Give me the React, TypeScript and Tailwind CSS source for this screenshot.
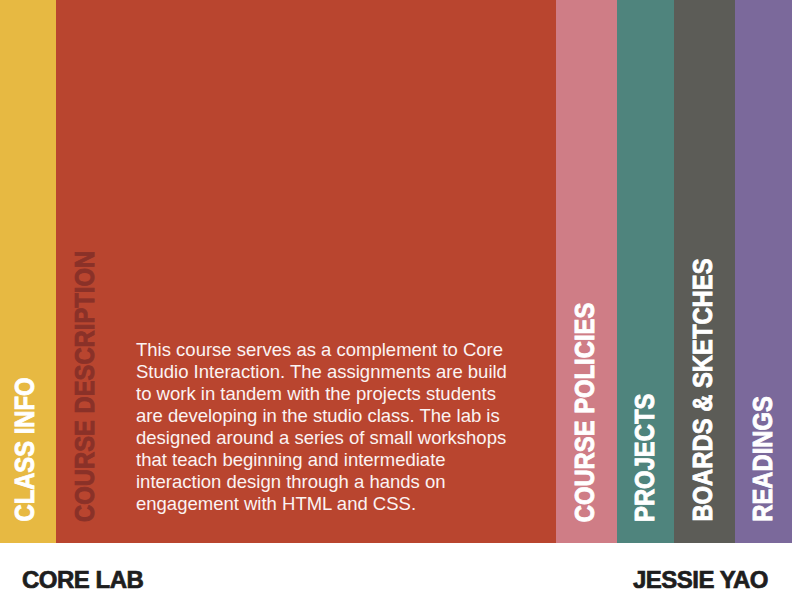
interface Column {
  label: string;
  bg: string;
  width: string;
  pad: string;
}

const columns: Column[] = [
  { label: 'CLASS INFO', bg: 'bg-[#e7b942]', width: 'w-[56px]', pad: 'pl-[11px]' },
  { label: 'COURSE POLICIES', bg: 'bg-[#cf7d86]', width: 'w-[61px]', pad: 'pl-[15px]' },
  { label: 'PROJECTS', bg: 'bg-[#4f847d]', width: 'w-[57px]', pad: 'pl-[14px]' },
  { label: 'BOARDS & SKETCHES', bg: 'bg-[#5c5c57]', width: 'w-[61px]', pad: 'pl-[15px]' },
  { label: 'READINGS', bg: 'bg-[#7b699b]', width: 'w-[57px]', pad: 'pl-[14px]' },
];

// vertical label, read bottom to top; squeezed along the text so Arial gets Futura's length
function Label({ text, color = 'text-white' }: { text: string; color?: string }) {
  return (
    <div className="origin-bottom scale-y-[0.85]">
      <span
        className={`${color} block rotate-180 whitespace-nowrap font-['Liberation_Sans',Arial,sans-serif] text-[28px] font-bold leading-[28px] [-webkit-text-stroke:0.9px_currentColor] [writing-mode:vertical-rl]`}
      >
        {text}
      </span>
    </div>
  );
}

function Tab({ col }: { col: Column }) {
  return (
    <div className={`${col.bg} ${col.width} ${col.pad} flex shrink-0 flex-col justify-end pb-[21px]`}>
      <Label text={col.label} />
    </div>
  );
}

const description = [
  'This course serves as a complement to Core',
  'Studio Interaction. The assignments are build',
  'to work in tandem with the projects students',
  'are developing in the studio class. The lab is',
  'designed around a series of small workshops',
  'that teach beginning and intermediate',
  'interaction design through a hands on',
  'engagement with HTML and CSS.',
];

export default function App() {
  return (
    <div className="flex h-[612px] w-[792px] flex-col bg-white font-['Liberation_Sans',Arial,sans-serif]">
      <div className="flex h-[543px]">
        <Tab col={columns[0]} />
        <div className="flex w-[500px] shrink-0 items-end bg-[#b9452f] pb-[21px] pl-[15px]">
          <Label text="COURSE DESCRIPTION" color="text-[#8a3128]" />
          <p className="mb-[7px] ml-[37px] text-[18.5px] leading-[22px] text-[#fbf3f3]">
            {description.map((line) => (
              <span key={line} className="block whitespace-nowrap">
                {line}
              </span>
            ))}
          </p>
        </div>
        {columns.slice(1).map((col) => (
          <Tab key={col.label} col={col} />
        ))}
      </div>
      <footer className="flex flex-1 items-center justify-between pl-[22px] pr-[24px] pt-[5px] text-[24px] font-bold tracking-[-0.5px] text-[#1e1e1e] [-webkit-text-stroke:0.7px_currentColor]">
        <span>CORE LAB</span>
        <span>JESSIE YAO</span>
      </footer>
    </div>
  );
}
